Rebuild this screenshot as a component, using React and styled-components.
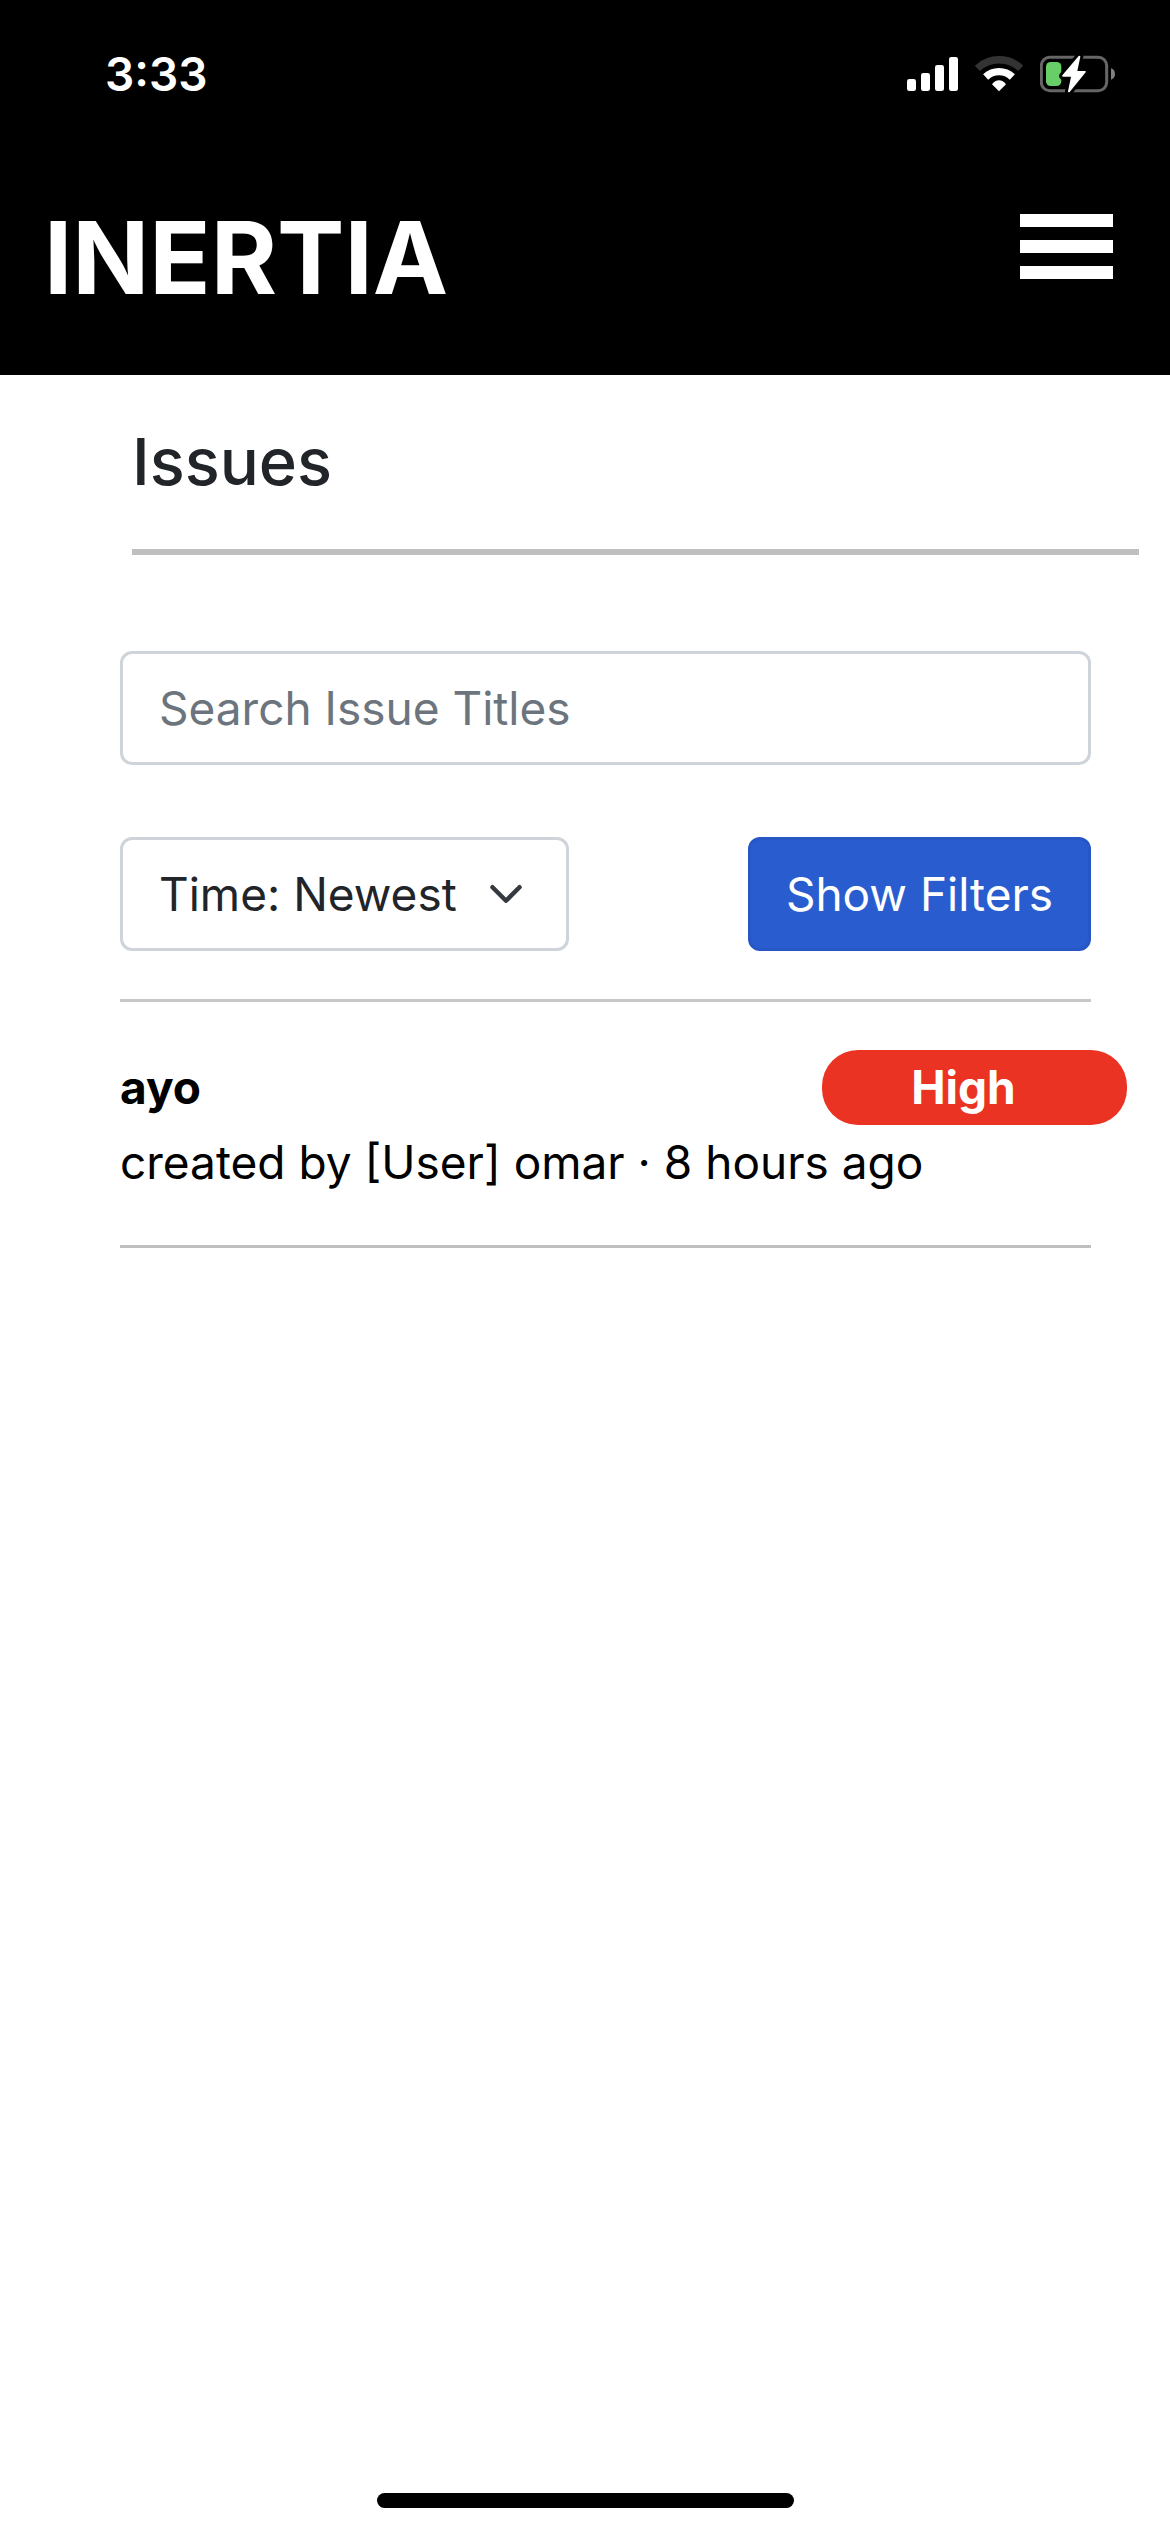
import React, { useState } from "react";
import styled, { createGlobalStyle } from "styled-components";

const GlobalStyle = createGlobalStyle`
  *, *::before, *::after { box-sizing: border-box; }
  body {
    margin: 0;
    background: #fff;
    color: #212529;
    font-family: Inter, "Liberation Sans", sans-serif;
    font-size: 46px;
    line-height: 72px;
  }
`;

const Page = styled.div`
  display: flex;
  flex-direction: column;
  min-height: 100vh;
`;

const TopArea = styled.header`
  background: #000;
  color: #fff;
  padding-bottom: 57px;
`;

const StatusBar = styled.div`
  display: flex;
  align-items: center;
  justify-content: space-between;
  height: 148px;
  padding: 0 55px 0 105px;
`;

const Clock = styled.time`
  font-size: 46px;
  font-weight: 600;
`;

const StatusIcons = styled.div`
  display: flex;
  gap: 16px;
`;

const NavBar = styled.nav`
  display: flex;
  align-items: flex-start;
  justify-content: space-between;
  padding: 48px 57px 0 44px;
`;

const Brand = styled.a`
  color: inherit;
  font-size: 101px;
  font-weight: 700;
  line-height: 122px;
  text-decoration: none;
`;

const MenuButton = styled.button`
  display: grid;
  gap: 13px;
  width: 93px;
  margin-top: 18px;
  padding: 0;
  border: 0;
  background: none;
  cursor: pointer;
`;

const MenuLine = styled.span`
  height: 13px;
  background: #fff;
`;

const TitleBar = styled.div`
  margin: 0 31px 0 132px;
  padding: 48px 0;
  border-bottom: 6px solid #bfbfbf;
`;

const Title = styled.h1`
  margin: 0;
  font-size: 65px;
  font-weight: 500;
  line-height: 78px;
`;

const Content = styled.main`
  flex: 1;
  padding: 96px 79px 0 120px;
`;

const SearchInput = styled.input`
  display: block;
  width: 100%;
  height: 114px;
  padding: 0 36px;
  border: 3px solid #ced4da;
  border-radius: 12px;
  background: #fff;
  color: #212529;
  font: inherit;
  &::placeholder { color: #6c757d; opacity: 1; }
`;

const Controls = styled.div`
  display: flex;
  justify-content: space-between;
  padding: 72px 0 48px;
`;

const SelectWrap = styled.div`
  display: grid;
  align-items: center;
  width: 449px;
  & > * { grid-area: 1 / 1; }
  & > svg { justify-self: end; margin-right: 45px; pointer-events: none; }
`;

const SortSelect = styled.select`
  appearance: none;
  width: 100%;
  height: 114px;
  padding: 0 96px 0 36px;
  border: 3px solid #ced4da;
  border-radius: 12px;
  background: #fff;
  color: #212529;
  font: inherit;
`;

const FilterButton = styled.button`
  width: 343px;
  height: 114px;
  padding: 0;
  border: 3px solid #2657c4;
  border-radius: 12px;
  background: #295dcf;
  color: #fff;
  font: inherit;
  cursor: pointer;
`;

const IssueList = styled.ul`
  margin: 0;
  padding: 0;
  border-top: 3px solid #c8c8c8;
  list-style: none;
`;

const Issue = styled.li`
  padding: 48px 0 45px;
  border-bottom: 3px solid #bfbfbf;
  color: #000;
  line-height: 75px;
`;

const IssueHead = styled.div`
  display: flex;
  justify-content: space-between;
  margin-right: -36px;
`;

const IssueLink = styled.a`
  color: inherit;
  font-weight: 700;
  text-decoration: none;
`;

const Priority = styled.span`
  width: 305px;
  border-radius: 36px;
  background: ${({ $color }) => $color};
  color: #fff;
  font-weight: 700;
  text-align: center;
  padding-right: 22px;
`;

const IssueMeta = styled.p`
  margin: 0;
`;

const HomeArea = styled.footer`
  display: flex;
  justify-content: center;
  padding-bottom: 24px;
`;

const HomeIndicator = styled.div`
  width: 417px;
  height: 15px;
  border-radius: 8px;
  background: #000;
`;

const SignalIcon = () => (
  <svg width="51" height="38" viewBox="81 75 153 114" fill="#fff" aria-hidden="true">
    <rect x="81" y="147" width="27" height="36" rx="7" />
    <rect x="123" y="129" width="27" height="54" rx="7" />
    <rect x="165" y="105" width="27" height="78" rx="7" />
    <rect x="207" y="81" width="27" height="102" rx="7" />
  </svg>
);

const WifiIcon = () => (
  <svg width="50" height="38" viewBox="282 75 150 114" fill="none" aria-hidden="true">
    <path d="M292 115A95 95 0 0 1 422 115" stroke="#333" strokeWidth="22" />
    <path d="M317 141A58 58 0 0 1 397 141" stroke="#fff" strokeWidth="22" />
    <path d="M357 184L336 163Q345 151 357 151T378 163Z" fill="#fff" />
  </svg>
);

const BatteryIcon = () => (
  <svg width="75" height="38" viewBox="480 75 225 114" aria-hidden="true">
    <rect x="484" y="82" width="196" height="100" rx="25" fill="none" stroke="#666" strokeWidth="9" />
    <path d="M693 115Q705 119 705 132T693 149Z" fill="#808080" />
    <rect x="498" y="96" width="46" height="72" rx="14" fill="#68ce67" />
    <path
      d="M596 78L547 136Q545 140 549 140H573L564 184Q564 188 569 186L617 127Q619 123 615 123H592L601 80Q600 75 596 78Z"
      fill="#fff"
      stroke="#000"
      strokeWidth="18"
      strokeLinejoin="round"
      paintOrder="stroke"
    />
  </svg>
);

const ChevronIcon = () => (
  <svg width="36" height="36" viewBox="0 0 16 16" fill="none" aria-hidden="true">
    <path
      d="m2 5 6 6 6-6"
      stroke="#343a40"
      strokeWidth="2"
      strokeLinecap="round"
      strokeLinejoin="round"
    />
  </svg>
);

const issues = [
  { id: 1, title: "ayo", meta: "created by [User] omar · 8 hours ago", priority: "High", color: "#eb3323" },
];

export default function App() {
  const [query, setQuery] = useState("");
  const shown = issues.filter((issue) => issue.title.includes(query));

  return (
    <>
      <GlobalStyle />
      <Page>
        <TopArea>
          <StatusBar>
            <Clock>3:33</Clock>
            <StatusIcons>
              <SignalIcon />
              <WifiIcon />
              <BatteryIcon />
            </StatusIcons>
          </StatusBar>
          <NavBar>
            <Brand href="#">INERTIA</Brand>
            <MenuButton type="button" aria-label="Menu">
              <MenuLine />
              <MenuLine />
              <MenuLine />
            </MenuButton>
          </NavBar>
        </TopArea>
        <TitleBar>
          <Title>Issues</Title>
        </TitleBar>
        <Content>
          <SearchInput
            type="text"
            aria-label="Search Issue Titles"
            placeholder="Search Issue Titles"
            value={query}
            onChange={(event) => setQuery(event.target.value)}
          />
          <Controls>
            <SelectWrap>
              <SortSelect aria-label="Sort issues" defaultValue="newest">
                <option value="newest">Time: Newest</option>
                <option value="oldest">Time: Oldest</option>
              </SortSelect>
              <ChevronIcon />
            </SelectWrap>
            <FilterButton type="button">Show Filters</FilterButton>
          </Controls>
          <IssueList>
            {shown.map((issue) => (
              <Issue key={issue.id}>
                <IssueHead>
                  <IssueLink href="#">{issue.title}</IssueLink>
                  <Priority $color={issue.color}>{issue.priority}</Priority>
                </IssueHead>
                <IssueMeta>{issue.meta}</IssueMeta>
              </Issue>
            ))}
          </IssueList>
        </Content>
        <HomeArea>
          <HomeIndicator />
        </HomeArea>
      </Page>
    </>
  );
}
